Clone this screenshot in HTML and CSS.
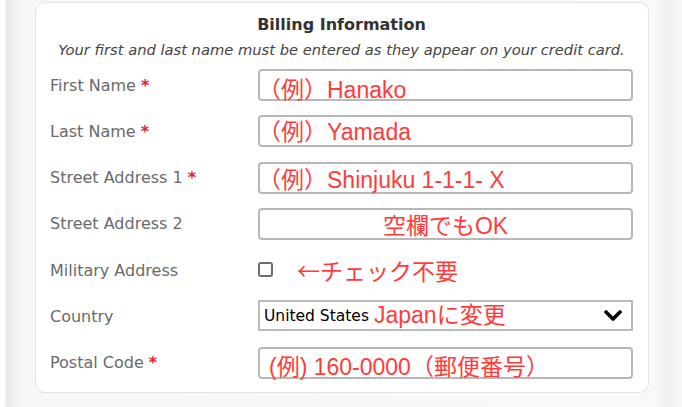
FILE: index.html
```html
<!DOCTYPE html>
<html>
<head>
    <title>Billing Information</title>
    <link rel="stylesheet" href="styles.css">
</head>
<body>
    <div class="page">
        <div class="card">
            <h2 class="title">Billing Information</h2>
            <p class="subtitle">Your first and last name must be entered as they appear on your credit card.</p>

            <div class="form">
                <label class="label">First Name <span class="req">*</span></label>
                <div class="field">
                    <input class="text-input" type="text">
                    <span class="note note-first">（例）Hanako</span>
                </div>

                <label class="label">Last Name <span class="req">*</span></label>
                <div class="field">
                    <input class="text-input" type="text">
                    <span class="note note-last">（例）Yamada</span>
                </div>

                <label class="label">Street Address 1 <span class="req">*</span></label>
                <div class="field">
                    <input class="text-input" type="text">
                    <span class="note note-street1">（例）Shinjuku 1-1-1- X</span>
                </div>

                <label class="label">Street Address 2</label>
                <div class="field">
                    <input class="text-input" type="text">
                    <span class="note note-street2">空欄でもOK</span>
                </div>

                <label class="label">Military Address</label>
                <div class="field check-field">
                    <input class="checkbox" type="checkbox">
                    <span class="check-note">←チェック不要</span>
                </div>

                <label class="label">Country</label>
                <div class="field">
                    <select class="select">
                        <option>United States</option>
                        <option>Japan</option>
                    </select>
                    <svg class="chevron" width="18" height="12" viewBox="0 0 18 12">
                        <polyline points="2,2 9,9 16,2" fill="none" stroke="#000" stroke-width="3.6" stroke-linecap="round" stroke-linejoin="round"/>
                    </svg>
                    <span class="note note-country">Japanに変更</span>
                </div>

                <label class="label">Postal Code <span class="req">*</span></label>
                <div class="field">
                    <input class="text-input" type="text">
                    <span class="note note-postal">(例) 160-0000（郵便番号）</span>
                </div>
            </div>
        </div>
    </div>
</body>
</html>
```

FILE: styles.css
```css
body {
    margin: 0;
    font-family: "DejaVu Sans", Verdana, sans-serif;
    background: linear-gradient(to right, #fdfdfd 0, #fdfdfd 5px, #e9e9e9 6px, #f7f7f7 20px, #f9f9f9 655px, #efefef 668px, #f8f8f8 682px);
    height: 407px;
    overflow: hidden;
}
.page {
    padding: 2px 33px 0 35px;
}
.card {
    background: white;
    border: 1px solid #e3e3e3;
    border-radius: 10px;
    padding: 12px 15px 13px 14px;
}
.title {
    margin: 0;
    text-align: center;
    font-size: 16px;
    line-height: 20px;
    font-weight: bold;
    color: #333;
}
.subtitle {
    margin: 5px 0 0;
    text-align: center;
    font-size: 14.7px;
    line-height: 20px;
    font-style: italic;
    color: #444;
}
.form {
    display: grid;
    grid-template-columns: 208px 1fr;
    grid-auto-rows: 32px;
    row-gap: 14.3px;
    margin-top: 9px;
}
.label {
    display: flex;
    align-items: center;
    font-size: 16px;
    color: #6a6a6a;
}
.req {
    color: #e8173a;
    font-weight: bold;
    margin-left: 5px;
}
.field {
    position: relative;
}
.text-input {
    box-sizing: border-box;
    width: 100%;
    height: 32px;
    margin: 0;
    border: 2px solid #b8b8b8;
    border-radius: 4px;
    background: white;
}
.select {
    box-sizing: border-box;
    width: 100%;
    height: 31px;
    margin: 0;
    padding: 0 0 0 4px;
    border: 2px solid #bbbbbb;
    border-radius: 0;
    background: white;
    appearance: none;
    -webkit-appearance: none;
    font-family: "DejaVu Sans", Verdana, sans-serif;
    font-size: 15.5px;
    color: #000;
}
.chevron {
    position: absolute;
    right: 11px;
    top: 10px;
}
.check-field {
    display: flex;
    align-items: center;
}
.checkbox {
    appearance: none;
    -webkit-appearance: none;
    box-sizing: border-box;
    width: 15px;
    height: 15px;
    margin: -2px 0 0;
    border: 2px solid #6c6c6c;
    border-radius: 3px;
    background: white;
}
.note,
.check-note {
    font-family: "Liberation Sans", "Noto Sans CJK JP", sans-serif;
    font-size: 23px;
    line-height: 23px;
    color: #ff3b3b;
    white-space: nowrap;
}
.note {
    position: absolute;
    left: 0;
    pointer-events: none;
}
.check-note {
    font-family: "Noto Sans CJK JP", sans-serif;
    margin-left: 24px;
}
.note-first { top: 10px; }
.note-last { top: 6px; }
.note-street1 { top: 7px; }
.note-street2 { top: 7px; left: 0; right: 0; text-align: center; }
.note-country { top: 4px; left: 116px; }
.note-postal { top: 9px; left: 11px; }
```
